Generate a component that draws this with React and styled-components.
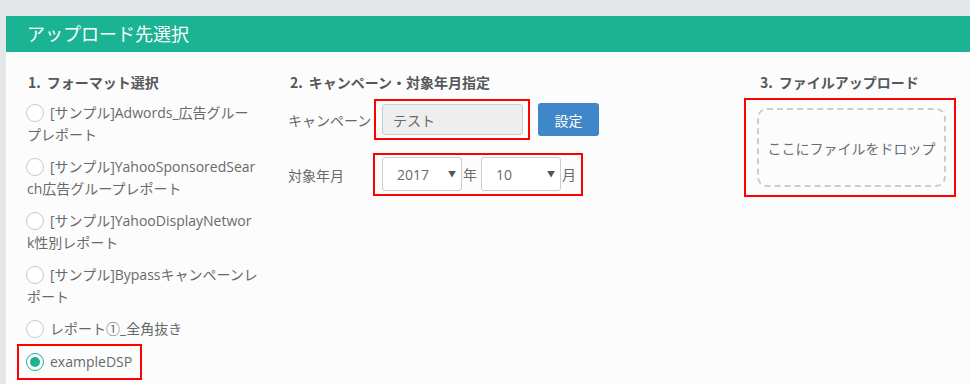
import React from "react";
import styled, { createGlobalStyle } from "styled-components";

const GlobalStyle = createGlobalStyle`
  body {
    margin: 0;
    background: #e4e7ea;
    font-family: "Open Sans", "Noto Sans CJK JP", sans-serif;
    color: #676a6c;
  }
`;

const Panel = styled.div`
  margin: 16px 0 0 6px;
  background: #fcfcfc;
  min-height: 368px;
`;

const PanelHeader = styled.div`
  height: 36px;
  line-height: 35px;
  background: #1ab394;
  color: #fff;
  font-size: 18px;
  padding-left: 21px;
  font-family: "Noto Sans CJK JP", sans-serif;
`;

const PanelBody = styled.div`
  display: flex;
  padding: 20px 14px 0 21px;
`;

const Column = styled.div`
  width: ${(p) => p.$width}px;
  margin-left: ${(p) => p.$offset || 0}px;
  flex-shrink: 0;
`;

const Heading = styled.div`
  font-size: 14px;
  font-weight: bold;
  line-height: 20px;
  color: #55585b;
  padding-left: ${(p) => p.$indent || 0}px;
  font-family: "Noto Sans CJK JP", sans-serif;
`;

const Num = styled.span`
  margin-right: 6px;
`;

const FormatList = styled.div`
  margin-top: 10px;
`;

const FormatItem = styled.label`
  display: block;
  font-size: 14px;
  line-height: 22px;
  margin-bottom: 10px;
  white-space: nowrap;
  cursor: pointer;
`;

const Highlight = styled.div`
  display: inline-block;
  border: 2px solid #f00;
  padding: 5px 8px;
  margin: -7px 0 0 -10px;
`;

const Radio = styled.input.attrs({ type: "radio" })`
  appearance: none;
  width: 18px;
  height: 18px;
  margin: 0 6px 0 -1px;
  border: 1.5px solid #c8c8c8;
  border-radius: 50%;
  background: #fff;
  vertical-align: -4px;
  position: relative;
  box-sizing: border-box;

  &:checked {
    border-color: #1ab394;
  }
  &:checked::after {
    content: "";
    position: absolute;
    left: 2.5px;
    top: 2.5px;
    width: 10px;
    height: 10px;
    border-radius: 50%;
    background: #1ab394;
  }
`;

const FieldRow = styled.div`
  display: flex;
  align-items: center;
  margin-top: ${(p) => p.$top}px;
`;

const FieldLabel = styled.div`
  width: 86px;
  font-size: 14px;
  font-family: "Noto Sans CJK JP", sans-serif;
  color: #676a6c;
`;

const RedBox = styled.div`
  display: flex;
  align-items: center;
  border: 2px solid #f00;
  padding: ${(p) => p.$pad};
  margin-left: ${(p) => p.$shift || 0}px;
`;

const TextInput = styled.input`
  width: 141px;
  height: 31px;
  box-sizing: border-box;
  border: 1px solid #ccc;
  border-radius: 3px;
  background: #eee;
  padding: 0 10px;
  font-size: 14px;
  color: #676a6c;
  font-family: "Noto Sans CJK JP", sans-serif;
`;

const Button = styled.button`
  margin-left: 8px;
  width: 61px;
  height: 33px;
  border: none;
  border-radius: 3px;
  background: #3f87c8;
  color: #fff;
  font-size: 14px;
  font-family: "Noto Sans CJK JP", sans-serif;
`;

const SelectWrap = styled.div`
  position: relative;
  &::after {
    content: "▼";
    position: absolute;
    right: 6px;
    top: 11px;
    font-size: 8px;
    color: #555;
    pointer-events: none;
  }
`;

const Select = styled.select`
  appearance: none;
  width: 80px;
  height: 34px;
  box-sizing: border-box;
  border: 1px solid #ccc;
  border-radius: 3px;
  background: #fff;
  padding: 0 0 0 14px;
  font-size: 14px;
  color: #676a6c;
  font-family: "Open Sans", sans-serif;
`;

const Unit = styled.span`
  font-size: 14px;
  margin: 0 ${(p) => p.$right}px 0 1px;
  font-family: "Noto Sans CJK JP", sans-serif;
`;

const DropOuter = styled.div`
  margin-top: 6px;
  border: 2px solid #f00;
  padding: 8px 8px 8px 11px;
`;

const DropZone = styled.div`
  height: 79px;
  box-sizing: border-box;
  border: 2px dashed #ccc;
  border-radius: 10px;
  display: flex;
  align-items: center;
  justify-content: center;
  font-size: 14px;
  color: #6a6e74;
  font-family: "Noto Sans CJK JP", sans-serif;
`;

// each label is laid out on the same two lines as the original
const formats = [
  ["[サンプル]Adwords_広告グルー", "プレポート"],
  ["[サンプル]YahooSponsoredSear", "ch広告グループレポート"],
  ["[サンプル]YahooDisplayNetwor", "k性別レポート"],
  ["[サンプル]Bypassキャンペーンレ", "ポート"],
  ["レポート①_全角抜き"],
];

export default function App() {
  return (
    <>
      <GlobalStyle />
      <Panel>
        <PanelHeader>アップロード先選択</PanelHeader>
        <PanelBody>
          <Column $width={238}>
            <Heading $indent={1}>
              <Num>1.</Num>フォーマット選択
            </Heading>
            <FormatList>
              {formats.map((lines) => (
                <FormatItem key={lines[0]}>
                  <Radio name="format" />
                  {lines[0]}
                  {lines[1] && (
                    <>
                      <br />
                      {lines[1]}
                    </>
                  )}
                </FormatItem>
              ))}
              <Highlight>
                <FormatItem style={{ margin: 0 }}>
                  <Radio name="format" defaultChecked />
                  exampleDSP
                </FormatItem>
              </Highlight>
            </FormatList>
          </Column>
          <Column $width={330} $offset={23}>
            <Heading $indent={2}>
              <Num>2.</Num>キャンペーン・対象年月指定
            </Heading>
            <FieldRow $top={7}>
              <FieldLabel>キャンペーン</FieldLabel>
              <RedBox $pad="3px 5px 3px 6px">
                <TextInput defaultValue="テスト" />
              </RedBox>
              <Button>設定</Button>
            </FieldRow>
            <FieldRow $top={13}>
              <FieldLabel>対象年月</FieldLabel>
              <RedBox $pad="2px 5px 3px 7px" $shift={-1}>
                <SelectWrap>
                  <Select defaultValue="2017">
                    <option>2016</option>
                    <option>2017</option>
                    <option>2018</option>
                  </Select>
                </SelectWrap>
                <Unit $right={4}>年</Unit>
                <SelectWrap>
                  <Select defaultValue="10">
                    {Array.from({ length: 12 }, (_, i) => (
                      <option key={i}>{i + 1}</option>
                    ))}
                  </Select>
                </SelectWrap>
                <Unit $right={0}>月</Unit>
              </RedBox>
            </FieldRow>
          </Column>
          <Column $width={212} style={{ marginLeft: "auto" }}>
            <Heading $indent={16}>
              <Num>3.</Num>ファイルアップロード
            </Heading>
            <DropOuter>
              <DropZone>ここにファイルをドロップ</DropZone>
            </DropOuter>
          </Column>
        </PanelBody>
      </Panel>
    </>
  );
}
